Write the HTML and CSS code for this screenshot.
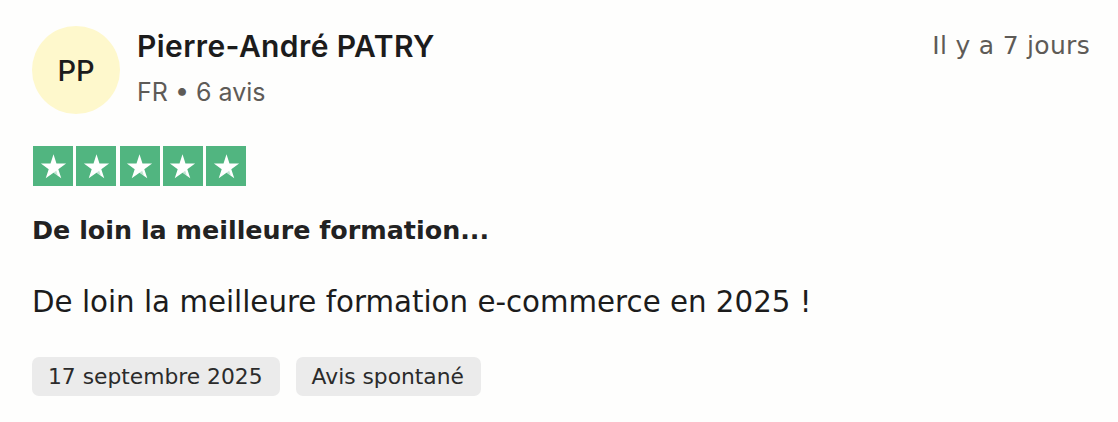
FILE: index.html
```html
<!DOCTYPE html>
<html lang="fr">
<head>
  <meta charset="UTF-8">
  <title>Avis</title>
  <link rel="stylesheet" href="styles.css">
</head>
<body>
  <article class="review">
    <header class="review-header">
      <div class="avatar">PP</div>
      <div class="author">
        <div class="author-name">Pierre-André PATRY</div>
        <div class="author-meta">FR • 6 avis</div>
      </div>
      <time class="review-date">Il y a 7 jours</time>
    </header>

    <div class="stars" aria-label="5 étoiles sur 5">
      <span class="star"><svg viewBox="0 0 24 24"><path d="M12 2.6l2.3 7.1h7.45l-6.03 4.38 2.3 7.1L12 16.8l-6.02 4.38 2.3-7.1L2.25 9.7H9.7z"/><path class="notch" d="M14.1 15.2l1.2 3.8L12 16.8z"/></svg></span>
      <span class="star"><svg viewBox="0 0 24 24"><path d="M12 2.6l2.3 7.1h7.45l-6.03 4.38 2.3 7.1L12 16.8l-6.02 4.38 2.3-7.1L2.25 9.7H9.7z"/><path class="notch" d="M14.1 15.2l1.2 3.8L12 16.8z"/></svg></span>
      <span class="star"><svg viewBox="0 0 24 24"><path d="M12 2.6l2.3 7.1h7.45l-6.03 4.38 2.3 7.1L12 16.8l-6.02 4.38 2.3-7.1L2.25 9.7H9.7z"/><path class="notch" d="M14.1 15.2l1.2 3.8L12 16.8z"/></svg></span>
      <span class="star"><svg viewBox="0 0 24 24"><path d="M12 2.6l2.3 7.1h7.45l-6.03 4.38 2.3 7.1L12 16.8l-6.02 4.38 2.3-7.1L2.25 9.7H9.7z"/><path class="notch" d="M14.1 15.2l1.2 3.8L12 16.8z"/></svg></span>
      <span class="star"><svg viewBox="0 0 24 24"><path d="M12 2.6l2.3 7.1h7.45l-6.03 4.38 2.3 7.1L12 16.8l-6.02 4.38 2.3-7.1L2.25 9.7H9.7z"/><path class="notch" d="M14.1 15.2l1.2 3.8L12 16.8z"/></svg></span>
    </div>

    <h2 class="review-title">De loin la meilleure formation...</h2>
    <p class="review-text">De loin la meilleure formation e-commerce en 2025 !</p>

    <div class="tags">
      <span class="tag">17 septembre 2025</span>
      <span class="tag">Avis spontané</span>
    </div>
  </article>
</body>
</html>
```

FILE: styles.css
```css
body {
  margin: 0;
  font-family: 'DejaVu Sans', 'Liberation Sans', sans-serif;
  background: #fefefd;
  color: #1c1c1c;
}

.review {
  padding: 26px 28px 0 32px;
}

.review-header {
  display: flex;
  align-items: flex-start;
}

.avatar {
  width: 88px;
  height: 88px;
  border-radius: 50%;
  background: #fef8cc;
  display: flex;
  align-items: center;
  justify-content: center;
  font-family: 'Inter', sans-serif;
  font-size: 29px;
  font-weight: 500;
  flex-shrink: 0;
}

.author {
  margin-left: 17px;
  flex: 1;
}

.author-name {
  font-family: 'Inter', sans-serif;
  font-size: 30px;
  font-weight: 600;
  letter-spacing: 0.4px;
  line-height: 40px;
}

.author-meta {
  font-family: 'Inter', sans-serif;
  font-size: 25px;
  color: #5e5b57;
  line-height: 36px;
  margin-top: 8px;
}

.review-date {
  font-size: 25px;
  color: #5e5b57;
  letter-spacing: 0.3px;
  line-height: 40px;
}

.stars {
  display: flex;
  gap: 3.3px;
  margin-top: 32px;
  padding-left: 1px;
}

.star {
  width: 40px;
  height: 40px;
  background: #51b580;
  display: flex;
  align-items: center;
  justify-content: center;
}

.star svg {
  width: 31px;
  height: 31px;
  fill: #fff;
}

.star .notch {
  fill: #51b580;
  opacity: 0.35;
}

.review-title {
  font-size: 25.4px;
  font-weight: 700;
  color: #222;
  margin: 24px 0 0;
  line-height: 40px;
}

.review-text {
  font-size: 29.3px;
  margin: 32px 0 0;
  line-height: 40px;
}

.tags {
  display: flex;
  gap: 16px;
  margin-top: 35px;
}

.tag {
  background: #ebebeb;
  border-radius: 7px;
  font-size: 21.8px;
  color: #2b2b2b;
  padding: 0 17px 0 16px;
  line-height: 39px;
}
```
